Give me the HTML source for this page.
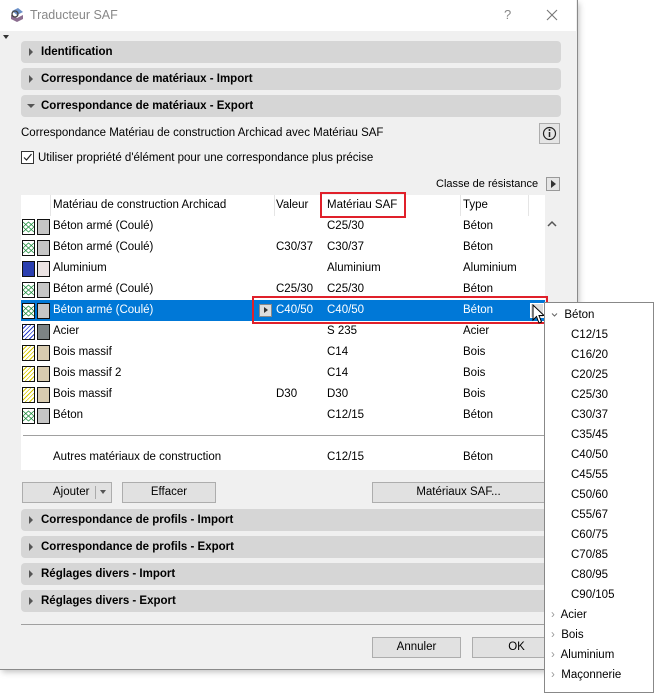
<!DOCTYPE html>
<html><head><meta charset="utf-8"><style>
*{box-sizing:border-box;margin:0;padding:0}
body{width:654px;height:694px;background:#fff;font-family:"Liberation Sans",sans-serif;font-size:11.5px;color:#000;position:relative;overflow:hidden}
.a{position:absolute}
.dlg{left:0;top:0;width:577px;height:669px;background:#f0f0f0;box-shadow:0 0 0 1px #8a8a8a,2px 3px 6px rgba(0,0,0,.25)}
.title{left:0;top:0;width:576px;height:31px;background:#fff}
.bar{left:21px;width:540px;height:22px;background:#d6d6d6;border-radius:4px;font-weight:bold;line-height:22px;padding-left:20px}
.bar:before{content:"";position:absolute;left:8px;top:7px;border-left:4px solid #555;border-top:4px solid transparent;border-bottom:4px solid transparent}
.bar.open:before{left:6px;top:9px;border-top:4px solid #555;border-left:4px solid transparent;border-right:4px solid transparent;border-bottom:0}
.btn{height:21px;background:#e1e1e1;border:1px solid #adadad;text-align:center;line-height:19px}
.row{left:21px;width:524px;height:21px;line-height:21px}
.row span{position:absolute}
.sw1,.sw2{position:absolute;top:3px;width:13px;height:16px;border:1px solid #111}
.sw1{left:1px}.sw2{left:16px}
.pop{left:544px;top:302px;width:110px;height:391px;background:#fff;border:1px solid #888}
.pi{position:absolute;left:0;height:20px;line-height:20px}
</style></head><body>
<div class="a dlg">
<div class="a title">
 <svg class="a" style="left:9px;top:7px" width="16" height="16" viewBox="0 0 16 16"><path d="M3 4 L9 1 L14 5 L8 8Z" fill="#6a8fc7"/><path d="M2 8 L8 11 L14 8 L14 12 L8 15 L2 12Z" fill="#8b6d8f"/><circle cx="6" cy="7" r="3" fill="none" stroke="#444" stroke-width="1.3"/></svg>
 <div class="a" style="left:30px;top:8px;color:#888;font-size:12.5px">Traducteur SAF</div>
 <div class="a" style="left:504px;top:7px;color:#888;font-size:13px">?</div>
 <svg class="a" style="left:546px;top:9px" width="12" height="12"><path d="M1 1L11 11M11 1L1 11" stroke="#777" stroke-width="1.1"/></svg>
</div>
<div class="a" style="left:3px;top:35px;border-top:4px solid #333;border-left:3px solid transparent;border-right:3px solid transparent"></div>
<div class="a bar" style="top:41px">Identification</div>
<div class="a bar" style="top:68px">Correspondance de matériaux - Import</div>
<div class="a bar open" style="top:95px">Correspondance de matériaux - Export</div>
<div class="a" style="left:21px;top:127px">Correspondance Matériau de construction Archicad avec Matériau SAF</div>
<div class="a" style="left:539px;top:123px;width:21px;height:21px;border:1px solid #adadad;background:#e5e5e5"><svg width="19" height="19"><circle cx="9.5" cy="9.5" r="6" fill="none" stroke="#222" stroke-width="1.2"/><path d="M9.5 8v5" stroke="#222" stroke-width="1.5"/><circle cx="9.5" cy="6" r="1" fill="#222"/></svg></div>
<div class="a" style="left:21px;top:151px;width:13px;height:13px;border:1px solid #333;background:#fff"><svg width="11" height="11"><path d="M2 5.5L4.5 8L9.5 2" stroke="#222" fill="none" stroke-width="1.2"/></svg></div>
<div class="a" style="left:38px;top:152px">Utiliser propriété d'élément pour une correspondance plus précise</div>
<div class="a" style="left:436px;top:178px;font-size:11px">Classe de résistance</div>
<div class="a" style="left:546px;top:177px;width:14px;height:14px;border:1px solid #999;background:#e5e5e5"><div class="a" style="left:4px;top:2px;border-left:5px solid #333;border-top:4px solid transparent;border-bottom:4px solid transparent"></div></div>
<div class="a" style="left:21px;top:195px;width:524px;height:275px;background:#fff"></div>
<div class="a" style="left:21px;top:195px;width:522px;height:21px;background:#fff;line-height:21px">
 <div class="a" style="left:29px;top:0;height:21px;border-left:1px solid #e5e5e5"></div>
 <span class="a" style="left:32px">Matériau de construction Archicad</span>
 <div class="a" style="left:253px;top:0;height:21px;border-left:1px solid #e5e5e5"></div>
 <span class="a" style="left:255px">Valeur</span>
 <div class="a" style="left:300px;top:0;height:21px;border-left:1px solid #e5e5e5"></div>
 <span class="a" style="left:306px">Matériau SAF</span>
 <div class="a" style="left:439px;top:0;height:21px;border-left:1px solid #e5e5e5"></div>
 <span class="a" style="left:442px">Type</span>
 <div class="a" style="left:507px;top:0;height:21px;border-left:1px solid #e5e5e5"></div>
</div>
<div class="a" style="left:320px;top:192px;width:86px;height:26px;border:2px solid #e0202a"></div>
<svg class="a" style="left:547px;top:220px" width="10" height="8"><path d="M1 6L5 2L9 6" stroke="#555" fill="none" stroke-width="1.5"/></svg>
<div class="a row" style="top:216px"><svg class="sw1" viewBox="0 0 11 14"><rect width="11" height="14" fill="#fff"/><path d="M0 2L11 12M0 12L11 2M0 7L5.5 2L11 7L5.5 12Z" stroke="#1a8a3a" fill="none" stroke-width=".8"/></svg><div class="sw2" style="background:#c6c6c6"></div><span style="left:32px">Béton armé (Coulé)</span><span style="left:306px">C25/30</span><span style="left:442px">Béton</span></div>
<div class="a row" style="top:237px"><svg class="sw1" viewBox="0 0 11 14"><rect width="11" height="14" fill="#fff"/><path d="M0 2L11 12M0 12L11 2M0 7L5.5 2L11 7L5.5 12Z" stroke="#1a8a3a" fill="none" stroke-width=".8"/></svg><div class="sw2" style="background:#c6c6c6"></div><span style="left:32px">Béton armé (Coulé)</span><span style="left:255px">C30/37</span><span style="left:306px">C30/37</span><span style="left:442px">Béton</span></div>
<div class="a row" style="top:258px"><div class="sw1" style="background:#2b3fb0"></div><div class="sw2" style="background:#ece4e4"></div><span style="left:32px">Aluminium</span><span style="left:306px">Aluminium</span><span style="left:442px">Aluminium</span></div>
<div class="a row" style="top:279px"><svg class="sw1" viewBox="0 0 11 14"><rect width="11" height="14" fill="#fff"/><path d="M0 2L11 12M0 12L11 2M0 7L5.5 2L11 7L5.5 12Z" stroke="#1a8a3a" fill="none" stroke-width=".8"/></svg><div class="sw2" style="background:#c6c6c6"></div><span style="left:32px">Béton armé (Coulé)</span><span style="left:255px">C25/30</span><span style="left:306px">C25/30</span><span style="left:442px">Béton</span></div>
<div class="a row" style="top:300px;background:#0078d7;color:#fff"><svg class="sw1" viewBox="0 0 11 14"><rect width="11" height="14" fill="#fff"/><path d="M0 2L11 12M0 12L11 2M0 7L5.5 2L11 7L5.5 12Z" stroke="#1a8a3a" fill="none" stroke-width=".8"/></svg><div class="sw2" style="background:#c6c6c6"></div><span style="left:32px">Béton armé (Coulé)</span>
 <div class="a" style="left:238px;top:4px;width:13px;height:13px;background:#ddd;border:1px solid #888"><div class="a" style="left:4px;top:2px;border-left:4px solid #333;border-top:3.5px solid transparent;border-bottom:3.5px solid transparent"></div></div>
 <span style="left:255px">C40/50</span><span style="left:306px">C40/50</span><span style="left:442px">Béton</span>
 <div class="a" style="left:509px;top:3px;width:14px;height:15px;background:#ddd;border:1px solid #fff"></div></div>
<div class="a" style="left:252px;top:296px;width:296px;height:28px;border:2px solid #e0202a"></div>
<svg class="a" style="left:532px;top:304px" width="14" height="22"><path d="M1 1L1 16L4.5 12.5L7 19L9.5 18L7 11.5L12 11.5Z" fill="#fff" stroke="#000" stroke-width="1"/></svg>
<div class="a row" style="top:321px"><div class="sw1" style="background:repeating-linear-gradient(135deg,#fff 0 2px,#2a3fd0 2px 3px)"></div><div class="sw2" style="background:#7c8284"></div><span style="left:32px">Acier</span><span style="left:306px">S 235</span><span style="left:442px">Acier</span></div>
<div class="a row" style="top:342px"><div class="sw1" style="background:repeating-linear-gradient(135deg,#fff 0 2px,#d8c800 2px 3px)"></div><div class="sw2" style="background:#d9ccb0"></div><span style="left:32px">Bois massif</span><span style="left:306px">C14</span><span style="left:442px">Bois</span></div>
<div class="a row" style="top:363px"><div class="sw1" style="background:repeating-linear-gradient(135deg,#fff 0 2px,#d8c800 2px 3px)"></div><div class="sw2" style="background:#d9ccb0"></div><span style="left:32px">Bois massif 2</span><span style="left:306px">C14</span><span style="left:442px">Bois</span></div>
<div class="a row" style="top:384px"><div class="sw1" style="background:repeating-linear-gradient(135deg,#fff 0 2px,#d8c800 2px 3px)"></div><div class="sw2" style="background:#d9ccb0"></div><span style="left:32px">Bois massif</span><span style="left:255px">D30</span><span style="left:306px">D30</span><span style="left:442px">Bois</span></div>
<div class="a row" style="top:405px"><svg class="sw1" viewBox="0 0 11 14"><rect width="11" height="14" fill="#fff"/><path d="M0 2L11 12M0 12L11 2M0 7L5.5 2L11 7L5.5 12Z" stroke="#1a8a3a" fill="none" stroke-width=".8"/></svg><div class="sw2" style="background:#c6c6c6"></div><span style="left:32px">Béton</span><span style="left:306px">C12/15</span><span style="left:442px">Béton</span></div>
<div class="a" style="left:23px;top:435px;width:522px;border-top:1px solid #a0a0a0"></div>
<div class="a row" style="top:447px"><span style="left:32px">Autres matériaux de construction</span><span style="left:306px">C12/15</span><span style="left:442px">Béton</span></div>
<div class="a btn" style="left:22px;top:482px;width:90px;text-align:left;padding-left:30px">Ajouter<div class="a" style="left:72px;top:3px;height:13px;border-left:1px solid #aaa"></div><div class="a" style="left:77px;top:7px;border-top:4px solid #555;border-left:3.5px solid transparent;border-right:3.5px solid transparent"></div></div>
<div class="a btn" style="left:122px;top:482px;width:94px">Effacer</div>
<div class="a btn" style="left:372px;top:482px;width:173px">Matériaux SAF...</div>
<div class="a bar" style="top:509px">Correspondance de profils - Import</div>
<div class="a bar" style="top:536px">Correspondance de profils - Export</div>
<div class="a bar" style="top:563px">Réglages divers - Import</div>
<div class="a bar" style="top:590px">Réglages divers - Export</div>
<div class="a" style="left:21px;top:624px;width:540px;border-top:1px solid #a0a0a0"></div>
<div class="a btn" style="left:372px;top:637px;width:89px">Annuler</div>
<div class="a btn" style="left:472px;top:637px;width:89px">OK</div>
</div>
<div class="a pop">
<div class="pi" style="top:2px;left:6px"><svg width="7" height="6" style="vertical-align:middle"><path d="M1 1.5L3.5 4L6 1.5" stroke="#666" fill="none"/></svg>&nbsp; Béton</div>
<div class="pi" style="top:22px;left:26px">C12/15</div>
<div class="pi" style="top:42px;left:26px">C16/20</div>
<div class="pi" style="top:62px;left:26px">C20/25</div>
<div class="pi" style="top:82px;left:26px">C25/30</div>
<div class="pi" style="top:102px;left:26px">C30/37</div>
<div class="pi" style="top:122px;left:26px">C35/45</div>
<div class="pi" style="top:142px;left:26px">C40/50</div>
<div class="pi" style="top:162px;left:26px">C45/55</div>
<div class="pi" style="top:182px;left:26px">C50/60</div>
<div class="pi" style="top:202px;left:26px">C55/67</div>
<div class="pi" style="top:222px;left:26px">C60/75</div>
<div class="pi" style="top:242px;left:26px">C70/85</div>
<div class="pi" style="top:262px;left:26px">C80/95</div>
<div class="pi" style="top:282px;left:26px">C90/105</div>
<div class="pi" style="top:302px;left:6px"><span style="color:#999">›</span>&nbsp; Acier</div>
<div class="pi" style="top:322px;left:6px"><span style="color:#999">›</span>&nbsp; Bois</div>
<div class="pi" style="top:342px;left:6px"><span style="color:#999">›</span>&nbsp; Aluminium</div>
<div class="pi" style="top:362px;left:6px"><span style="color:#999">›</span>&nbsp; Maçonnerie</div>
</div>
</body></html>
